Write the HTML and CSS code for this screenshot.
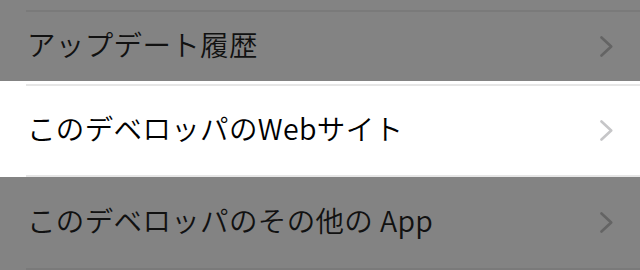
FILE: index.html
```html
<!DOCTYPE html>
<html lang="ja">
<head>
<meta charset="utf-8">
<link rel="stylesheet" href="styles.css">
</head>
<body>
<div class="list">
  <div class="band dim band-top">
    <div class="sep"></div>
    <div class="row">
      <span class="label">アップデート履歴</span>
      <svg class="chev" viewBox="0 0 13 21" width="13" height="21"><path d="M1.5 1.5 L11.2 10.5 L1.5 19.5" fill="none" stroke-width="2.6" stroke-linecap="round" stroke-linejoin="round"/></svg>
    </div>
  </div>
  <div class="band lit band-mid">
    <div class="sep"></div>
    <div class="row">
      <span class="label">このデベロッパのWebサイト</span>
      <svg class="chev" viewBox="0 0 13 21" width="13" height="21"><path d="M1.5 1.5 L11.2 10.5 L1.5 19.5" fill="none" stroke-width="2.6" stroke-linecap="round" stroke-linejoin="round"/></svg>
    </div>
    <div class="sep"></div>
  </div>
  <div class="band dim band-bot">
    <div class="row">
      <span class="label">このデベロッパのその他の App</span>
      <svg class="chev" viewBox="0 0 13 21" width="13" height="21"><path d="M1.5 1.5 L11.2 10.5 L1.5 19.5" fill="none" stroke-width="2.6" stroke-linecap="round" stroke-linejoin="round"/></svg>
    </div>
    <div class="sep"></div>
  </div>
</div>
</body>
</html>
```
FILE: styles.css
```css
html, body {
  margin: 0;
  padding: 0;
  width: 640px;
  height: 270px;
  overflow: hidden;
  font-family: "Noto Sans CJK JP", "Noto Sans", sans-serif;
}
.list {
  display: flex;
  flex-direction: column;
}
.band {
  display: flex;
  flex-direction: column;
}
.dim { background: #838383; }
.lit { background: #ffffff; }
.band-top {
  height: 81px;
  padding-top: 10px;
  box-sizing: border-box;
}
.band-mid {
  height: 96px;
  padding-top: 3px;
  box-sizing: border-box;
}
.band-bot {
  height: 93px;
  box-sizing: border-box;
}
.sep {
  height: 2px;
  margin-left: 26px;
  flex: none;
}
.dim .sep { background: #7a7a7a; }
.lit .sep { background: #e6e6e6; }
.row {
  flex: 1;
  display: flex;
  align-items: center;
  justify-content: space-between;
  padding-left: 27px;
  padding-right: 27px;
  padding-bottom: 5px;
}
.chev { margin-top: 5px; }
.label {
  font-size: 28.5px;
  font-weight: 350;
  line-height: 1;
  letter-spacing: 0.35px;
}
.dim .label { color: #111111; }
.lit .label { color: #000000; }
.chev { flex: none; }
.dim .chev path { stroke: #646464; }
.lit .chev path { stroke: #c6c6c8; }
```
